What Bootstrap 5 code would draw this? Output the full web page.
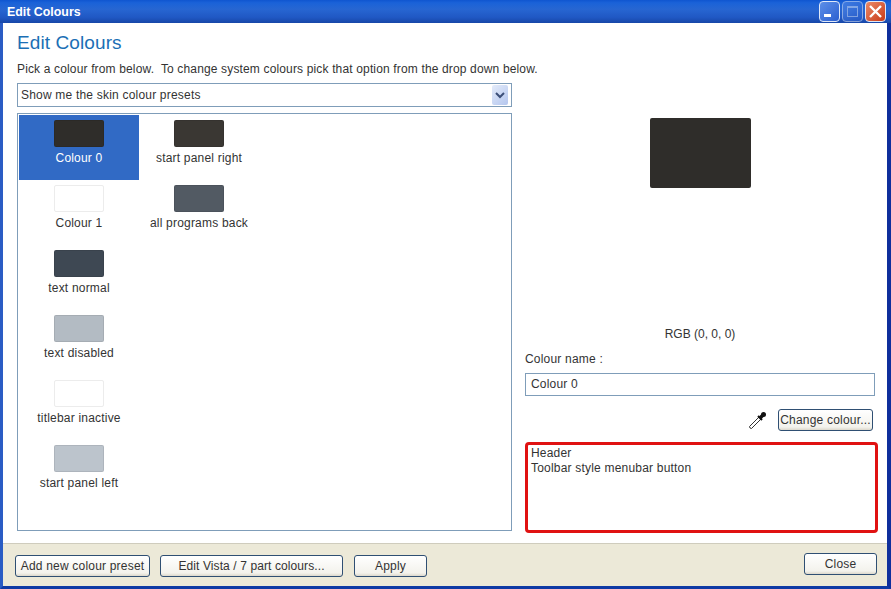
<!DOCTYPE html>
<html lang="en">
<head>
<meta charset="utf-8">
<title>Edit Colours</title>
<link href="https://cdn.jsdelivr.net/npm/bootstrap@5.3.0/dist/css/bootstrap.min.css" rel="stylesheet">
<style>
html,body{height:589px;width:891px;overflow:hidden;margin:0}
body{font-family:"Liberation Sans",Arial,sans-serif;font-size:12px;color:#333;background:#fff;letter-spacing:.2px}
.xp-win{width:891px;height:589px;border-left:3px solid #2a5cc4;border-right:4px solid #0f2f9c;border-bottom:3px solid #0f3aa4;background:#fff}
.xp-title{height:23px;margin:0 -4px 0 -3px;padding:0 5px 0 7px;background:linear-gradient(180deg,#0f55d0 0,#1a62d8 12%,#2766d2 40%,#2058c4 75%,#1747a8 100%);color:#fff;font:700 12.4px/22px "Liberation Sans",sans-serif;letter-spacing:0}
.xp-ctls{gap:2px}
.xp-ctl{width:21px;height:21px;border:1px solid #dfe8f8;border-radius:4px;background:linear-gradient(135deg,#5d8fe8,#2a5fd0)}
.xp-ctl.dim{opacity:.55}
.xp-ctl.shut{background:linear-gradient(135deg,#ea8a68,#c93a18)}
.xp-ctl svg{display:block}
.xp-body{padding:0 3px 0 14px}
.xp-head{color:#1b6fb5;font-size:19px;line-height:22px;margin:9px 0 0;font-weight:400;letter-spacing:.1px}
.xp-intro{margin:8px 0 0;line-height:15px;letter-spacing:.15px;white-space:pre}
.xp-main{margin-top:6px;height:453px}
.xp-left{width:495px}
.xp-right{width:353px;margin-left:13px}
.xp-drop{height:24px;border:1px solid #7f9db9;padding:0 3px;line-height:22px}
.xp-arrow{width:16px;height:20px;border-radius:2px;background:linear-gradient(135deg,#e3ebfa,#b4c6ee)}
.xp-arrow svg{display:block}
.xp-list{height:418px;margin-top:6px;border:1px solid #7f9db9;padding:1px;display:grid;grid-auto-flow:column;grid-template-rows:repeat(6,65px);grid-auto-columns:120px;justify-content:start;align-content:start}
.xp-tile{padding-top:5px;text-align:center;line-height:15px}
.xp-tile.on{background:#316ac5;color:#fff}
.xp-sw{display:block;width:50px;height:27px;margin:0 auto 3px;border-radius:2px;border:1px solid rgba(0,0,0,.08)}
.xp-sw.pale{border-color:#ececec}
.xp-tile span.xp-lb{display:block;margin-top:4px}
.xp-big{width:101px;height:70px;background:#2f2d2a;border-radius:2px;margin:35px auto 0 125px}
.xp-rgb{margin-top:139px;text-align:center;line-height:15px;letter-spacing:0;padding-right:3px}
.xp-nm{margin-top:10px;line-height:15px}
.xp-in{width:350px;height:23px;border:1px solid #7f9db9;margin-top:6px;padding:0 5px;line-height:21px}
.xp-tools{margin-top:13px;width:348px;height:22px}
.xp-btn{font:12px/1 "Liberation Sans",sans-serif;color:#333;border:1px solid #2f4f73;border-radius:3px;background:linear-gradient(180deg,#fff,#f3f2ec 85%,#dcd8cc);padding:0;height:22px;text-align:center;letter-spacing:.2px}
.xp-change{width:95px}
.xp-add{width:135px}
.xp-vista{width:183px;margin-left:10px;letter-spacing:.1px}
.xp-apply{width:73px;margin-left:11px}
.xp-close{width:73px}
.xp-note{margin-top:11px;height:91px;border:3px solid #e01212;border-radius:4px;padding:1px 3px;line-height:15px}
.xp-foot{height:43px;background:#ece9d8;border-top:1px solid #cfccbd;padding:0 10px 0 12px}
.xp-foot .xp-btn{margin-top:11px}
.xp-foot .xp-btn.xp-close{margin-top:9px}
.xp-dropper{margin-right:11px}
.sw-0{background:#2f2d2a}.sw-1{background:#fff}.sw-2{background:#3e4853}.sw-3{background:#b3bbc3}.sw-4{background:#bcc4cc}.sw-5{background:#3a3733}.sw-6{background:#525a63}
</style>
</head>
<body>
<div class="xp-win d-flex flex-column">
  <div class="xp-title d-flex align-items-center justify-content-between">
    <span>Edit Colours</span>
    <div class="d-flex xp-ctls">
      <div class="xp-ctl"><svg width="19" height="19" viewBox="0 0 19 19"><rect x="4" y="12" width="7" height="3" fill="#fff"/></svg></div>
      <div class="xp-ctl dim"><svg width="19" height="19" viewBox="0 0 19 19"><rect x="4.5" y="4.5" width="10" height="10" fill="none" stroke="#cfdcf5"/><rect x="4" y="4" width="11" height="2" fill="#cfdcf5"/></svg></div>
      <div class="xp-ctl shut"><svg width="19" height="19" viewBox="0 0 19 19"><path d="M4 4l11 11M15 4L4 15" stroke="#fff" stroke-width="2.4"/></svg></div>
    </div>
  </div>
  <div class="xp-body flex-grow-1">
    <h1 class="xp-head">Edit Colours</h1>
    <p class="xp-intro">Pick a colour from below.  To change system colours pick that option from the drop down below.</p>
    <div class="xp-main d-flex">
      <div class="xp-left">
        <div class="xp-drop d-flex align-items-center justify-content-between">
          <span>Show me the skin colour presets</span>
          <span class="xp-arrow"><svg width="16" height="20" viewBox="0 0 16 20"><path d="M4 8l4 4 4-4" fill="none" stroke="#3c4f78" stroke-width="2"/></svg></span>
        </div>
        <div class="xp-list">
          <div class="xp-tile on"><span class="xp-sw sw-0"></span><span class="xp-lb">Colour 0</span></div>
          <div class="xp-tile"><span class="xp-sw pale sw-1"></span><span class="xp-lb">Colour 1</span></div>
          <div class="xp-tile"><span class="xp-sw sw-2"></span><span class="xp-lb">text normal</span></div>
          <div class="xp-tile"><span class="xp-sw sw-3"></span><span class="xp-lb">text disabled</span></div>
          <div class="xp-tile"><span class="xp-sw pale sw-1"></span><span class="xp-lb">titlebar inactive</span></div>
          <div class="xp-tile"><span class="xp-sw sw-4"></span><span class="xp-lb">start panel left</span></div>
          <div class="xp-tile"><span class="xp-sw sw-5"></span><span class="xp-lb">start panel right</span></div>
          <div class="xp-tile"><span class="xp-sw sw-6"></span><span class="xp-lb">all programs back</span></div>
        </div>
      </div>
      <div class="xp-right">
        <div class="xp-big"></div>
        <div class="xp-rgb">RGB (0, 0, 0)</div>
        <div class="xp-nm">Colour name :</div>
        <div class="xp-in">Colour 0</div>
        <div class="xp-tools d-flex align-items-center justify-content-end">
          <svg class="xp-dropper" width="18" height="18" viewBox="0 0 18 18"><path d="M1 17l-.5-1.5L10 6l2 2-9.5 9.5z" fill="#fff" stroke="#333" stroke-width="1"/><path d="M9 5l4 4" stroke="#111" stroke-width="2"/><path d="M11 7l3-3" stroke="#111" stroke-width="3.5"/><circle cx="14.5" cy="3.5" r="2.5" fill="#111"/></svg>
          <button class="xp-btn xp-change" type="button">Change colour...</button>
        </div>
        <div class="xp-note">Header<br>Toolbar style menubar button</div>
      </div>
    </div>
  </div>
  <div class="xp-foot d-flex justify-content-between">
    <div class="d-flex">
      <button class="xp-btn xp-add" type="button">Add new colour preset</button>
      <button class="xp-btn xp-vista" type="button">Edit Vista / 7 part colours...</button>
      <button class="xp-btn xp-apply" type="button">Apply</button>
    </div>
    <button class="xp-btn xp-close" type="button">Close</button>
  </div>
</div>
</body>
</html>
